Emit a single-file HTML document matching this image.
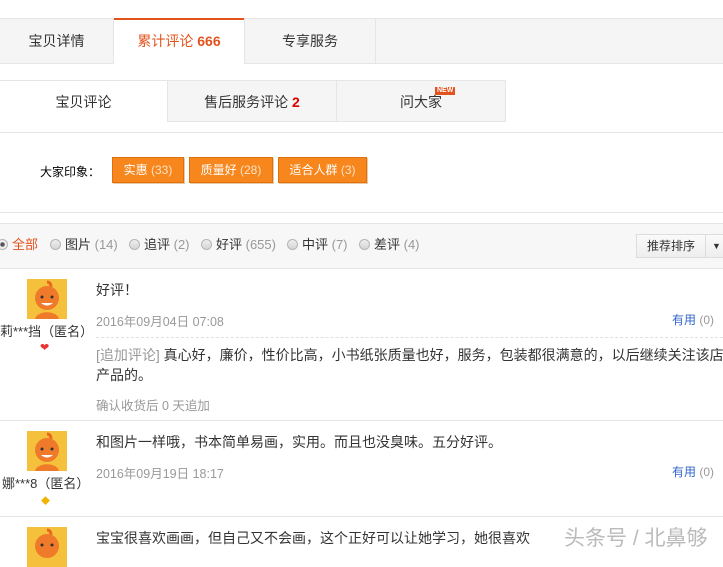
<!DOCTYPE html><html><head><meta charset="utf-8"><style>
*{margin:0;padding:0;box-sizing:border-box}
body{width:723px;height:555px;overflow:hidden;background:#fff;font-family:"Liberation Sans","Noto Sans CJK SC",sans-serif;font-size:12px;color:#333;position:relative}
.a{position:absolute;white-space:nowrap}
.t1{top:18px;height:46px;background:#f5f5f5;border-top:1px solid #e5e5e5;border-bottom:1px solid #e5e5e5;font-size:14px;line-height:44px;text-align:center}
.t2{top:80px;height:42px;background:#f5f5f5;border:1px solid #e5e5e5;font-size:14px;line-height:42px;text-align:center}
.btn{top:157px;height:26px;background:#f7861d;border:1px solid #e0700e;color:#fff;line-height:24px;text-align:center;box-shadow:1px 1px 0 #e8c9a8}
.btn span{color:#fde2c3}
.rad{display:inline-block;width:11px;height:11px;border-radius:50%;border:1px solid #b5b5b5;background:linear-gradient(#eee,#d5d5d5);vertical-align:-1px;margin-right:4px}
.f{top:237px;line-height:16px;font-size:13px}
.g{color:#999}
.av{width:40px;height:40px}
.rv{font-size:14px}
</style></head><body>
<div class="a t1" style="left:0;width:723px"></div>
<div class="a t1" style="left:0;width:114px;border-right:1px solid #e5e5e5">宝贝详情</div>
<div class="a t1" style="left:114px;width:130px;background:#fff;border-top:2px solid #e4531e;border-bottom:none;color:#e4531e;line-height:42px">累计评论 <b>666</b></div>
<div class="a t1" style="left:244px;width:132px;border-right:1px solid #e5e5e5;border-left:1px solid #e5e5e5">专享服务</div>

<div class="a" style="left:0;top:80px;width:167px;height:42px;border-top:1px solid #e5e5e5;font-size:14px;line-height:42px;text-align:center">宝贝评论</div>
<div class="a t2" style="left:167px;width:170px">售后服务评论 <b style="color:#d00">2</b></div>
<div class="a t2" style="left:336px;width:170px">问大家</div>
<div class="a" style="left:435px;top:87px;background:#e4531e;color:#fff;font-size:7px;line-height:8px;padding:0 2px;font-weight:bold">NEW</div>
<div class="a" style="left:0;top:132px;width:723px;border-top:1px solid #e5e5e5"></div>

<div class="a" style="left:40px;top:163px;color:#000">大家印象：</div>
<div class="a btn" style="left:112px;width:72px">实惠 <span>(33)</span></div>
<div class="a btn" style="left:189px;width:84px">质量好 <span>(28)</span></div>
<div class="a btn" style="left:278px;width:89px">适合人群 <span>(3)</span></div>

<div class="a" style="left:0;top:212px;width:723px;border-top:1px solid #e5e5e5"></div>
<div class="a" style="left:0;top:223px;width:723px;height:46px;background:#f7f7f7;border-top:1px solid #e5e5e5;border-bottom:1px solid #e5e5e5"></div>
<div class="a f" style="left:-3px"><span class="rad" style="background:radial-gradient(#555 30%,#eee 40%)"></span><span style="color:#e4531e">全部</span></div>
<div class="a f" style="left:50px"><span class="rad"></span>图片 <span class="g">(14)</span></div>
<div class="a f" style="left:129px"><span class="rad"></span>追评 <span class="g">(2)</span></div>
<div class="a f" style="left:201px"><span class="rad"></span>好评 <span class="g">(655)</span></div>
<div class="a f" style="left:287px"><span class="rad"></span>中评 <span class="g">(7)</span></div>
<div class="a f" style="left:359px"><span class="rad"></span>差评 <span class="g">(4)</span></div>
<div class="a" style="left:636px;top:234px;width:90px;height:24px;border:1px solid #ddd;background:linear-gradient(#fafafa,#eee);line-height:22px;padding-left:10px">推荐排序<span style="position:absolute;left:68px;top:0;height:22px;border-left:1px solid #ddd;padding-left:6px;font-size:9px">▼</span></div>

<svg class="a av" style="left:27px;top:279px" viewBox="0 0 40 40"><rect width="40" height="40" fill="#f5c03c"/><path d="M20 3c3 0 5 3 3 6" stroke="#e8661e" stroke-width="3" fill="none"/><circle cx="20" cy="19" r="12" fill="#ef7a2a"/><path d="M8 40c2-9 22-9 24 0z" fill="#ef7a2a"/><circle cx="15" cy="18" r="1.5" fill="#333"/><circle cx="25" cy="18" r="1.5" fill="#333"/><path d="M14 24q6 5 12 0z" fill="#fff"/></svg>
<div class="a" style="left:0;top:321px;font-size:13px">莉***挡（匿名）</div>
<div class="a" style="left:40px;top:341px;color:#e33;font-size:11px">❤</div>
<div class="a rv" style="left:96px;top:280px">好评！</div>
<div class="a g" style="left:96px;top:311px;font-size:12.5px">2016年09月04日 07:08</div>
<div class="a" style="left:672px;top:311px;color:#36c">有用 <span class="g">(0)</span></div>
<div class="a" style="left:96px;top:337px;width:627px;border-top:1px dashed #e0e0e0"></div>
<div class="a rv" style="left:96px;top:345px;line-height:20px"><span class="g">[追加评论]</span> 真心好，廉价，性价比高，小书纸张质量也好，服务，包装都很满意的，以后继续关注该店<br>产品的。</div>
<div class="a g" style="left:96px;top:395px;font-size:12.5px">确认收货后 0 天追加</div>
<div class="a" style="left:0;top:420px;width:723px;border-top:1px solid #e5e5e5"></div>

<svg class="a av" style="left:27px;top:431px" viewBox="0 0 40 40"><rect width="40" height="40" fill="#f5c03c"/><path d="M20 3c3 0 5 3 3 6" stroke="#e8661e" stroke-width="3" fill="none"/><circle cx="20" cy="19" r="12" fill="#ef7a2a"/><path d="M8 40c2-9 22-9 24 0z" fill="#ef7a2a"/><circle cx="15" cy="18" r="1.5" fill="#333"/><circle cx="25" cy="18" r="1.5" fill="#333"/><path d="M14 24q6 5 12 0z" fill="#fff"/></svg>
<div class="a" style="left:2px;top:473px;font-size:13px">娜***8（匿名）</div>
<div class="a" style="left:41px;top:494px;color:#f0b400;font-size:9px">◆</div>
<div class="a rv" style="left:96px;top:432px">和图片一样哦，书本简单易画，实用。而且也没臭味。五分好评。</div>
<div class="a g" style="left:96px;top:463px;font-size:12.5px">2016年09月19日 18:17</div>
<div class="a" style="left:672px;top:463px;color:#36c">有用 <span class="g">(0)</span></div>
<div class="a" style="left:0;top:516px;width:723px;border-top:1px solid #e5e5e5"></div>

<svg class="a av" style="left:27px;top:527px" viewBox="0 0 40 40"><rect width="40" height="40" fill="#f5c03c"/><path d="M20 3c3 0 5 3 3 6" stroke="#e8661e" stroke-width="3" fill="none"/><circle cx="20" cy="19" r="12" fill="#ef7a2a"/><circle cx="15" cy="18" r="1.5" fill="#333"/><circle cx="25" cy="18" r="1.5" fill="#333"/></svg>
<div class="a rv" style="left:96px;top:528px">宝宝很喜欢画画，但自己又不会画，这个正好可以让她学习，她很喜欢</div>
<div class="a" style="left:564px;top:522px;font-size:21px;color:#bbb">头条号 / 北鼻够</div>
</body></html>
